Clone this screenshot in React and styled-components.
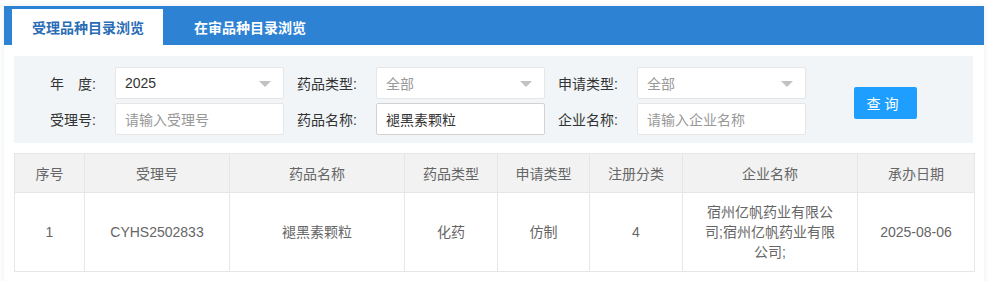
import React from "react";
import styled, { createGlobalStyle } from "styled-components";

const GlobalStyle = createGlobalStyle`
  html, body {
    margin: 0;
    padding: 0;
    background: #ffffff;
    font-family: "Liberation Sans", "Noto Sans CJK SC", sans-serif;
  }
`;

const Wrapper = styled.div`
  width: 980px;
  margin: 6px 0 0 4px;
  background: #fff;
  box-shadow: 0 0 5px rgba(40, 90, 130, 0.12);
  padding-bottom: 12px;
`;

const TabBar = styled.div`
  height: 39px;
  background: #2d82d4;
  display: flex;
  align-items: flex-end;
  padding-left: 8px;
  gap: 11px;
`;

const Tab = styled.div`
  height: 36px;
  padding: 0 19px 0 20px;
  display: flex;
  align-items: center;
  font-size: 14px;
  font-weight: bold;
  color: ${p => (p.$active ? "#2a6cb6" : "#ffffff")};
  background: ${p => (p.$active ? "#ffffff" : "transparent")};
`;

const Body = styled.div`
  padding: 11px 11px 0 10px;
`;

const FilterPanel = styled.div`
  background: #f1f5f7;
  padding: 11px 9px 8px 9px;
  display: flex;
  align-items: center;
`;

const FieldGrid = styled.div`
  display: grid;
  grid-template-columns: repeat(3, auto);
  row-gap: 4px;
`;

const Field = styled.div`
  display: flex;
  align-items: center;
`;

const Label = styled.label`
  width: 92px;
  box-sizing: border-box;
  padding-right: 19px;
  text-align: right;
  font-size: 14px;
  color: #333;
  white-space: nowrap;
`;

const InputBox = styled.div`
  position: relative;
  width: 169px;
  height: 32px;
  box-sizing: border-box;
  background: #fff;
  border: 1px solid ${p => (p.$focus ? "#d2d2d2" : "#e6e6e6")};
  border-radius: 2px;
  display: flex;
  align-items: center;
  padding-left: 9px;
  font-size: 14px;
  color: ${p => (p.$muted ? "#999" : "#333")};
`;

const Arrow = styled.span`
  position: absolute;
  right: 12px;
  top: 13px;
  width: 0;
  height: 0;
  border-left: 6px solid transparent;
  border-right: 6px solid transparent;
  border-top: 6px solid #c2c2c2;
`;

const SearchButton = styled.button`
  margin-left: 48px;
  margin-top: 4px;
  width: 63px;
  height: 32px;
  border: none;
  border-radius: 2px;
  background: #1e9fff;
  color: #fff;
  font-family: inherit;
  font-size: 14px;
  letter-spacing: 4px;
  padding-left: 4px;
`;

const Table = styled.table`
  margin-top: 10px;
  width: 960px;
  border-collapse: collapse;
  table-layout: fixed;
  font-size: 14px;
  color: #666;
`;

const Th = styled.th`
  height: 38px;
  background: #f2f2f2;
  border: 1px solid #e6e6e6;
  font-weight: normal;
  text-align: center;
  padding: 0;
`;

const Td = styled.td`
  height: 78px;
  border: 1px solid #e6e6e6;
  text-align: center;
  padding: 0 ${p => p.$pad || 10}px;
  line-height: 20px;
`;

const columns = [
  { title: "序号", width: 70 },
  { title: "受理号", width: 145 },
  { title: "药品名称", width: 175 },
  { title: "药品类型", width: 93 },
  { title: "申请类型", width: 92 },
  { title: "注册分类", width: 93 },
  { title: "企业名称", width: 175 },
  { title: "承办日期", width: 117 },
];

const row = [
  "1",
  "CYHS2502833",
  "褪黑素颗粒",
  "化药",
  "仿制",
  "4",
  "宿州亿帆药业有限公司;宿州亿帆药业有限公司;",
  "2025-08-06",
];

export default function App() {
  return (
    <>
      <GlobalStyle />
      <Wrapper>
        <TabBar>
          <Tab $active>受理品种目录浏览</Tab>
          <Tab>在审品种目录浏览</Tab>
        </TabBar>
        <Body>
          <FilterPanel>
            <FieldGrid>
              <Field>
                <Label>年　度:</Label>
                <InputBox>
                  2025
                  <Arrow />
                </InputBox>
              </Field>
              <Field>
                <Label>药品类型:</Label>
                <InputBox $muted>
                  全部
                  <Arrow />
                </InputBox>
              </Field>
              <Field>
                <Label>申请类型:</Label>
                <InputBox $muted>
                  全部
                  <Arrow />
                </InputBox>
              </Field>
              <Field>
                <Label>受理号:</Label>
                <InputBox $muted>请输入受理号</InputBox>
              </Field>
              <Field>
                <Label>药品名称:</Label>
                <InputBox $focus>褪黑素颗粒</InputBox>
              </Field>
              <Field>
                <Label>企业名称:</Label>
                <InputBox $muted>请输入企业名称</InputBox>
              </Field>
            </FieldGrid>
            <SearchButton>查询</SearchButton>
          </FilterPanel>
          <Table>
            <colgroup>
              {columns.map(c => (
                <col key={c.title} style={{ width: c.width }} />
              ))}
            </colgroup>
            <thead>
              <tr>
                {columns.map(c => (
                  <Th key={c.title}>{c.title}</Th>
                ))}
              </tr>
            </thead>
            <tbody>
              <tr>
                {row.map((v, i) => (
                  <Td key={i} $pad={i === 6 ? 20 : 10}>
                    {v}
                  </Td>
                ))}
              </tr>
            </tbody>
          </Table>
        </Body>
      </Wrapper>
    </>
  );
}
